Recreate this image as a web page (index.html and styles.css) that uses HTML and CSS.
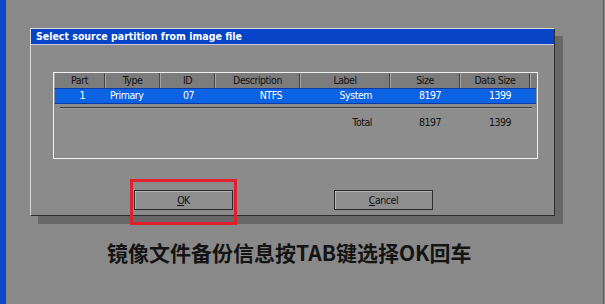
FILE: index.html
```html
<!DOCTYPE html>
<html>
<head>
<meta charset="utf-8">
<link rel="stylesheet" href="styles.css">
</head>
<body>
<div class="screen">
  <div class="edge"></div>
  <div class="main">
    <div class="dialog">
      <div class="titlebar">Select source partition from image file</div>
      <div class="table">
        <div class="thead">
          <div class="th c1">Part</div>
          <div class="th c2">Type</div>
          <div class="th c3">ID</div>
          <div class="th c4">Description</div>
          <div class="th c5">Label</div>
          <div class="th c6">Size</div>
          <div class="th c7">Data Size</div>
          <div class="th c8"></div>
        </div>
        <div class="row selected">
          <div class="td c1 r">1</div>
          <div class="td c2 l">Primary</div>
          <div class="td c3 ctr">07</div>
          <div class="td c4 r">NTFS</div>
          <div class="td c5 r">System</div>
          <div class="td c6 ctr">8197</div>
          <div class="td c7 ctr">1399</div>
        </div>
        <div class="sep"></div>
        <div class="row total">
          <div class="td c1"></div>
          <div class="td c2"></div>
          <div class="td c3"></div>
          <div class="td c4"></div>
          <div class="td c5 r">Total</div>
          <div class="td c6 ctr">8197</div>
          <div class="td c7 ctr">1399</div>
        </div>
      </div>
      <div class="buttons">
        <div class="btn ok"><span class="u">O</span>K<div class="highlight"></div></div>
        <div class="btn"><span class="u">C</span>ancel</div>
      </div>
    </div>
    <p class="caption">镜像文件备份信息按TAB键选择OK回车</p>
  </div>
  <div class="redge"></div>
</div>
</body>
</html>
```

FILE: styles.css
```css
html, body {
  margin: 0;
  padding: 0;
  background: #898989;
}
.screen {
  display: flex;
  width: 605px;
  height: 304px;
  overflow: hidden;
  background: #898989;
}
.edge {
  width: 6px;
  flex: none;
  background: #0c46c9;
}
.main {
  flex: 1;
  padding: 28px 0 0 24px;
}
.redge {
  width: 1px;
  margin-right: 1px;
  flex: none;
  background: #5a5a5a;
}
.dialog {
  position: relative;
  width: 525px;
  height: 188px;
  box-sizing: border-box;
  background: #8b8b8b;
  border-top: 1px solid #d8d8d8;
  border-left: 1px solid #d8d8d8;
  border-right: 1px solid #2e2e2e;
  border-bottom: 1px solid #2e2e2e;
  box-shadow: 8px 8px 0 #676767;
  font-family: "Liberation Sans Narrow", "DejaVu Sans Condensed", sans-serif;
  font-size: 10.5px;
  letter-spacing: -0.45px;
  color: #111;
}
.titlebar {
  height: 15px;
  line-height: 15px;
  background: #0643c7;
  border-bottom: 1px solid #c8c8d8;
  color: #fff;
  font-weight: bold;
  font-size: 10.5px;
  padding-left: 5px;
  letter-spacing: 0;
}
.table {
  margin: 27px 0 0 22px;
  width: 485px;
  height: 87px;
  box-sizing: border-box;
  border: 1px solid #f0f0f0;
  background: #8d8d8d;
}
.thead {
  display: flex;
  height: 15px;
  background: #7c7c7c;
}
.th {
  box-sizing: border-box;
  line-height: 15px;
  text-align: center;
  border-left: 1px solid #a4a4a4;
  border-right: 1px solid #454545;
  color: #111;
}
.c1 { width: 51px; }
.c2 { width: 55px; }
.c3 { width: 55px; }
.c4 { width: 85px; }
.c5 { width: 90px; }
.c6 { width: 70px; }
.c7 { width: 70px; }
.c8 { flex: 1; border-right: 0; }
.row {
  display: flex;
  height: 14px;
}
.td {
  box-sizing: border-box;
  line-height: 13px;
  flex: none;
}
.selected {
  margin: 0 0 0 1px;
  width: 481px;
  background: #0b63e4;
  border-top: 1px solid #0a3aa8;
  border-bottom: 1px solid #0a3aa8;
  color: #fff;
}
.selected .c1 { width: 50px; }
.r { text-align: right; }
.l { text-align: left; }
.ctr { text-align: center; }
.c1.r { padding-right: 20px; }
.c2.l { padding-left: 5px; }
.c3.ctr { padding-left: 2px; }
.c4.r { padding-right: 18px; }
.c5.r { padding-right: 18px; }
.c6.ctr { padding-left: 10px; }
.c7.ctr { padding-left: 10px; }
.sep {
  margin: 3px 5px 0 6px;
  height: 1px;
  background: #3c3c3c;
  border-bottom: 1px solid #a2a2a2;
}
.total {
  margin-top: 7px;
}
.buttons {
  display: flex;
  gap: 101px;
  margin: 31px 0 0 103px;
}
.btn {
  position: relative;
  width: 99px;
  height: 20px;
  box-sizing: border-box;
  border: 1px solid #2c2c2c;
  box-shadow: inset 1px 1px 0 #b4b4b4;
  background: #8e8e8e;
  text-align: center;
  line-height: 18px;
  color: #111;
}
.u {
  text-decoration: underline;
}
.highlight {
  position: absolute;
  left: -5px;
  top: -12px;
  width: 107px;
  height: 46px;
  box-sizing: border-box;
  border: 3px solid #e0202c;
}
.caption {
  margin: 22px 0 0 77px;
  font-family: "Noto Sans CJK SC", sans-serif;
  font-weight: bold;
  font-size: 21px;
  line-height: 28px;
  color: #141414;
}
```
